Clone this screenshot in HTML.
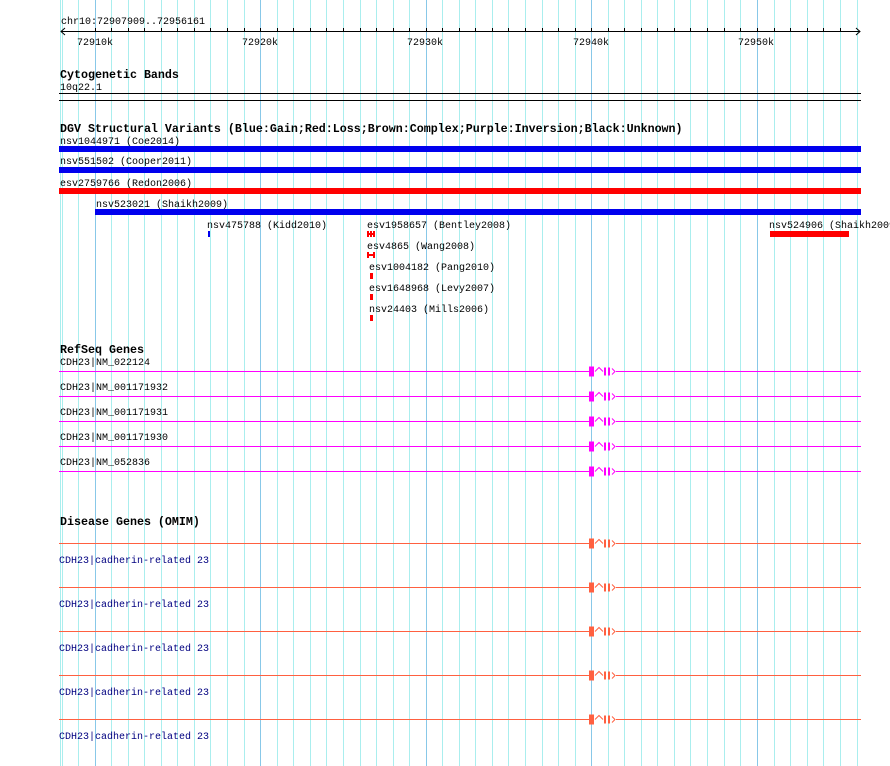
<!DOCTYPE html>
<html><head><meta charset="utf-8"><style>
html,body{margin:0;padding:0;background:#fff;width:890px;height:766px;overflow:hidden}
text{font-family:"Liberation Mono","DejaVu Sans Mono",monospace;font-size:10px;fill:#000}
.b{font-weight:bold;font-size:11.67px}
.n{fill:#000080}
</style></head><body>
<svg width="890" height="766" xmlns="http://www.w3.org/2000/svg">
<defs>
<g id="exm"><rect x="589" y="-5" width="5" height="10" fill="#ff00ff"/><polyline points="595,0 599,-4 603,0" fill="none" stroke="#ff00ff" stroke-width="1"/><rect x="604" y="-4" width="2" height="8" fill="#ff00ff"/><rect x="608" y="-4" width="2" height="8" fill="#ff00ff"/><polyline points="612,-3 615,0 612,3" fill="none" stroke="#ff00ff" stroke-width="1"/></g>
<g id="exo"><rect x="589" y="-5" width="5" height="10" fill="#ff6040"/><polyline points="595,0 599,-4 603,0" fill="none" stroke="#ff6040" stroke-width="1"/><rect x="604" y="-4" width="2" height="8" fill="#ff6040"/><rect x="608" y="-4" width="2" height="8" fill="#ff6040"/><polyline points="612,-3 615,0 612,3" fill="none" stroke="#ff6040" stroke-width="1"/></g>
</defs>
<g stroke="#aaeeee">
<line x1="60.5" y1="0" x2="60.5" y2="766"/><line x1="62.5" y1="0" x2="62.5" y2="766"/><line x1="78.5" y1="0" x2="78.5" y2="766"/>
<line x1="111.5" y1="0" x2="111.5" y2="766"/><line x1="128.5" y1="0" x2="128.5" y2="766"/><line x1="144.5" y1="0" x2="144.5" y2="766"/><line x1="161.5" y1="0" x2="161.5" y2="766"/><line x1="177.5" y1="0" x2="177.5" y2="766"/><line x1="194.5" y1="0" x2="194.5" y2="766"/><line x1="210.5" y1="0" x2="210.5" y2="766"/><line x1="227.5" y1="0" x2="227.5" y2="766"/><line x1="244.5" y1="0" x2="244.5" y2="766"/>
<line x1="277.5" y1="0" x2="277.5" y2="766"/><line x1="293.5" y1="0" x2="293.5" y2="766"/><line x1="310.5" y1="0" x2="310.5" y2="766"/><line x1="326.5" y1="0" x2="326.5" y2="766"/><line x1="343.5" y1="0" x2="343.5" y2="766"/><line x1="360.5" y1="0" x2="360.5" y2="766"/><line x1="376.5" y1="0" x2="376.5" y2="766"/><line x1="393.5" y1="0" x2="393.5" y2="766"/><line x1="409.5" y1="0" x2="409.5" y2="766"/>
<line x1="442.5" y1="0" x2="442.5" y2="766"/><line x1="459.5" y1="0" x2="459.5" y2="766"/><line x1="475.5" y1="0" x2="475.5" y2="766"/><line x1="492.5" y1="0" x2="492.5" y2="766"/><line x1="508.5" y1="0" x2="508.5" y2="766"/><line x1="525.5" y1="0" x2="525.5" y2="766"/><line x1="542.5" y1="0" x2="542.5" y2="766"/><line x1="558.5" y1="0" x2="558.5" y2="766"/><line x1="575.5" y1="0" x2="575.5" y2="766"/>
<line x1="608.5" y1="0" x2="608.5" y2="766"/><line x1="624.5" y1="0" x2="624.5" y2="766"/><line x1="641.5" y1="0" x2="641.5" y2="766"/><line x1="657.5" y1="0" x2="657.5" y2="766"/><line x1="674.5" y1="0" x2="674.5" y2="766"/><line x1="690.5" y1="0" x2="690.5" y2="766"/><line x1="707.5" y1="0" x2="707.5" y2="766"/><line x1="724.5" y1="0" x2="724.5" y2="766"/><line x1="740.5" y1="0" x2="740.5" y2="766"/>
<line x1="774.5" y1="0" x2="774.5" y2="766"/><line x1="790.5" y1="0" x2="790.5" y2="766"/><line x1="807.5" y1="0" x2="807.5" y2="766"/><line x1="823.5" y1="0" x2="823.5" y2="766"/><line x1="840.5" y1="0" x2="840.5" y2="766"/><line x1="857.5" y1="0" x2="857.5" y2="766"/>
</g>
<g stroke="#88c8e8">
<line x1="95.5" y1="0" x2="95.5" y2="766"/><line x1="260.5" y1="0" x2="260.5" y2="766"/><line x1="426.5" y1="0" x2="426.5" y2="766"/><line x1="591.5" y1="0" x2="591.5" y2="766"/><line x1="757.5" y1="0" x2="757.5" y2="766"/>
</g>
<text x="61" y="24">chr10:72907909..72956161</text>
<g stroke="#000" stroke-width="1">
<line x1="61" y1="31.5" x2="860" y2="31.5"/>
<polyline points="65,28 61,31.5 65,35" fill="none"/>
<polyline points="856,28 860,31.5 856,35" fill="none"/>
<path d="M95.5 28v4M111.5 28v4M128.5 28v4M144.5 28v4M161.5 28v4M177.5 28v4M194.5 28v4M210.5 28v4M227.5 28v4M244.5 28v4M260.5 28v4M277.5 28v4M293.5 28v4M310.5 28v4M326.5 28v4M343.5 28v4M360.5 28v4M376.5 28v4M393.5 28v4M409.5 28v4M426.5 28v4M442.5 28v4M459.5 28v4M475.5 28v4M492.5 28v4M508.5 28v4M525.5 28v4M542.5 28v4M558.5 28v4M575.5 28v4M591.5 28v4M608.5 28v4M624.5 28v4M641.5 28v4M657.5 28v4M674.5 28v4M690.5 28v4M707.5 28v4M724.5 28v4M740.5 28v4M757.5 28v4M774.5 28v4M790.5 28v4M807.5 28v4M823.5 28v4M840.5 28v4"/>
</g>
<text x="77" y="45">72910k</text><text x="242" y="45">72920k</text><text x="407" y="45">72930k</text><text x="573" y="45">72940k</text><text x="738" y="45">72950k</text>
<text class="b" x="60" y="78">Cytogenetic Bands</text>
<text x="60" y="90">10q22.1</text>
<rect x="59" y="93" width="802" height="1" fill="#000"/><rect x="59" y="100" width="802" height="1" fill="#000"/>
<text class="b" x="60" y="132">DGV Structural Variants (Blue:Gain;Red:Loss;Brown:Complex;Purple:Inversion;Black:Unknown)</text>
<text x="60" y="144">nsv1044971 (Coe2014)</text>
<rect x="59" y="146" width="802" height="6" fill="#0000ee"/>
<text x="60" y="164">nsv551502 (Cooper2011)</text>
<rect x="59" y="167" width="802" height="6" fill="#0000ee"/>
<text x="60" y="186">esv2759766 (Redon2006)</text>
<rect x="59" y="188" width="802" height="6" fill="#ff0000"/>
<text x="96" y="207">nsv523021 (Shaikh2009)</text>
<rect x="95" y="209" width="766" height="6" fill="#0000ee"/>
<text x="207" y="228">nsv475788 (Kidd2010)</text>
<rect x="208" y="231" width="2" height="6" fill="#0000ee"/>
<text x="367" y="228">esv1958657 (Bentley2008)</text>
<g fill="#ff0000"><rect x="367" y="231" width="2" height="6"/><rect x="370" y="231" width="2" height="6"/><rect x="373" y="231" width="2" height="6"/><rect x="367" y="233" width="8" height="2"/></g>
<text x="367" y="249">esv4865 (Wang2008)</text>
<g fill="#ff0000"><rect x="367" y="252" width="2" height="6"/><rect x="373" y="252" width="2" height="6"/><rect x="367" y="254" width="8" height="2"/></g>
<text x="369" y="270">esv1004182 (Pang2010)</text>
<rect x="370" y="273" width="3" height="6" fill="#ff0000"/>
<text x="369" y="291">esv1648968 (Levy2007)</text>
<rect x="370" y="294" width="3" height="6" fill="#ff0000"/>
<text x="369" y="312">nsv24403 (Mills2006)</text>
<rect x="370" y="315" width="3" height="6" fill="#ff0000"/>
<text x="769" y="228">nsv524906 (Shaikh2009)</text>
<rect x="770" y="231" width="79" height="6" fill="#ff0000"/>
<text class="b" x="60" y="353">RefSeq Genes</text>
<text x="60" y="365">CDH23|NM_022124</text>
<text x="60" y="390">CDH23|NM_001171932</text>
<text x="60" y="415">CDH23|NM_001171931</text>
<text x="60" y="440">CDH23|NM_001171930</text>
<text x="60" y="465">CDH23|NM_052836</text>
<g fill="#ff00ff">
<rect x="59" y="371" width="530" height="1"/><rect x="616" y="371" width="245" height="1"/>
<rect x="59" y="396" width="530" height="1"/><rect x="616" y="396" width="245" height="1"/>
<rect x="59" y="421" width="530" height="1"/><rect x="616" y="421" width="245" height="1"/>
<rect x="59" y="446" width="530" height="1"/><rect x="616" y="446" width="245" height="1"/>
<rect x="59" y="471" width="530" height="1"/><rect x="616" y="471" width="245" height="1"/>
</g>
<use href="#exm" y="371.5"/><use href="#exm" y="396.5"/><use href="#exm" y="421.5"/><use href="#exm" y="446.5"/><use href="#exm" y="471.5"/>
<text class="b" x="60" y="525">Disease Genes (OMIM)</text>
<text class="n" x="59" y="563">CDH23|cadherin-related 23</text>
<text class="n" x="59" y="607">CDH23|cadherin-related 23</text>
<text class="n" x="59" y="651">CDH23|cadherin-related 23</text>
<text class="n" x="59" y="695">CDH23|cadherin-related 23</text>
<text class="n" x="59" y="739">CDH23|cadherin-related 23</text>
<g fill="#ff6040">
<rect x="59" y="543" width="530" height="1"/><rect x="616" y="543" width="245" height="1"/>
<rect x="59" y="587" width="530" height="1"/><rect x="616" y="587" width="245" height="1"/>
<rect x="59" y="631" width="530" height="1"/><rect x="616" y="631" width="245" height="1"/>
<rect x="59" y="675" width="530" height="1"/><rect x="616" y="675" width="245" height="1"/>
<rect x="59" y="719" width="530" height="1"/><rect x="616" y="719" width="245" height="1"/>
</g>
<use href="#exo" y="543.5"/><use href="#exo" y="587.5"/><use href="#exo" y="631.5"/><use href="#exo" y="675.5"/><use href="#exo" y="719.5"/>
</svg>
</body></html>
